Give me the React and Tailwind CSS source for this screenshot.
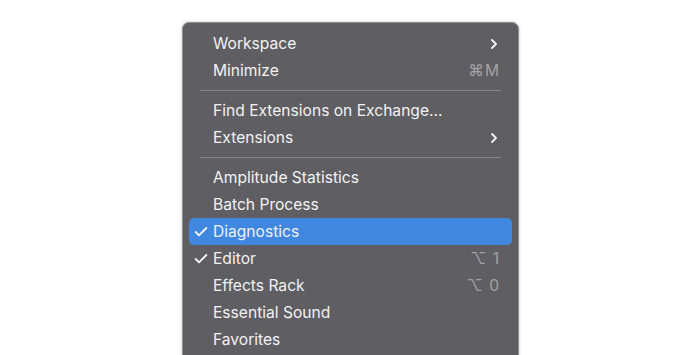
import { Check, ChevronRight } from "lucide-react";

const groups = [
  [
    { label: "Workspace", submenu: true },
    { label: "Minimize", shortcut: "⌘M" },
  ],
  [
    { label: "Find Extensions on Exchange..." },
    { label: "Extensions", submenu: true },
  ],
  [
    { label: "Amplitude Statistics" },
    { label: "Batch Process" },
    { label: "Diagnostics", checked: true, active: true },
    { label: "Editor", checked: true, shortcut: "⌥ 1" },
    { label: "Effects Rack", shortcut: "⌥ 0" },
    { label: "Essential Sound" },
    { label: "Favorites" },
  ],
];

function MenuItem({ item }) {
  return (
    <div
      className={`flex items-center h-[27px] mx-[6px] pl-[4px] pr-[12px] rounded-[5px] ${
        item.active ? "bg-[#3f87df]" : ""
      }`}
    >
      <span className="w-[20px] flex items-center">
        {item.checked && <Check size={16} strokeWidth={2.8} className="text-[#f4f4f5]" />}
      </span>
      <span className="flex-1 text-[#f2f2f3] pt-px">{item.label}</span>
      {item.submenu && (
        <ChevronRight size={16} strokeWidth={2.8} className="text-[#f2f2f3] -mr-[2px]" />
      )}
      {item.shortcut && (
        <span className="text-[#a3a2a7] tracking-[1px] pt-px">{item.shortcut}</span>
      )}
    </div>
  );
}

export default function App() {
  return (
    <div className="w-[700px] h-[355px] bg-white overflow-hidden relative">
      <div
        className="absolute left-[182px] top-[22px] w-[337px] h-[360px] bg-[#5f5e63] border border-[#8e8d92] rounded-[7px] pt-[7px] shadow-[0_0_3px_rgba(0,0,0,0.25)] text-[15.6px]"
        style={{ fontFamily: "Inter, 'Liberation Sans', sans-serif" }}
      >
        {groups.map((g, i) => (
          <div key={i}>
            {i > 0 && <div className="h-px bg-[#858489] mx-[17px] my-[6px]" />}
            {g.map((item) => (
              <MenuItem key={item.label} item={item} />
            ))}
          </div>
        ))}
      </div>
    </div>
  );
}
